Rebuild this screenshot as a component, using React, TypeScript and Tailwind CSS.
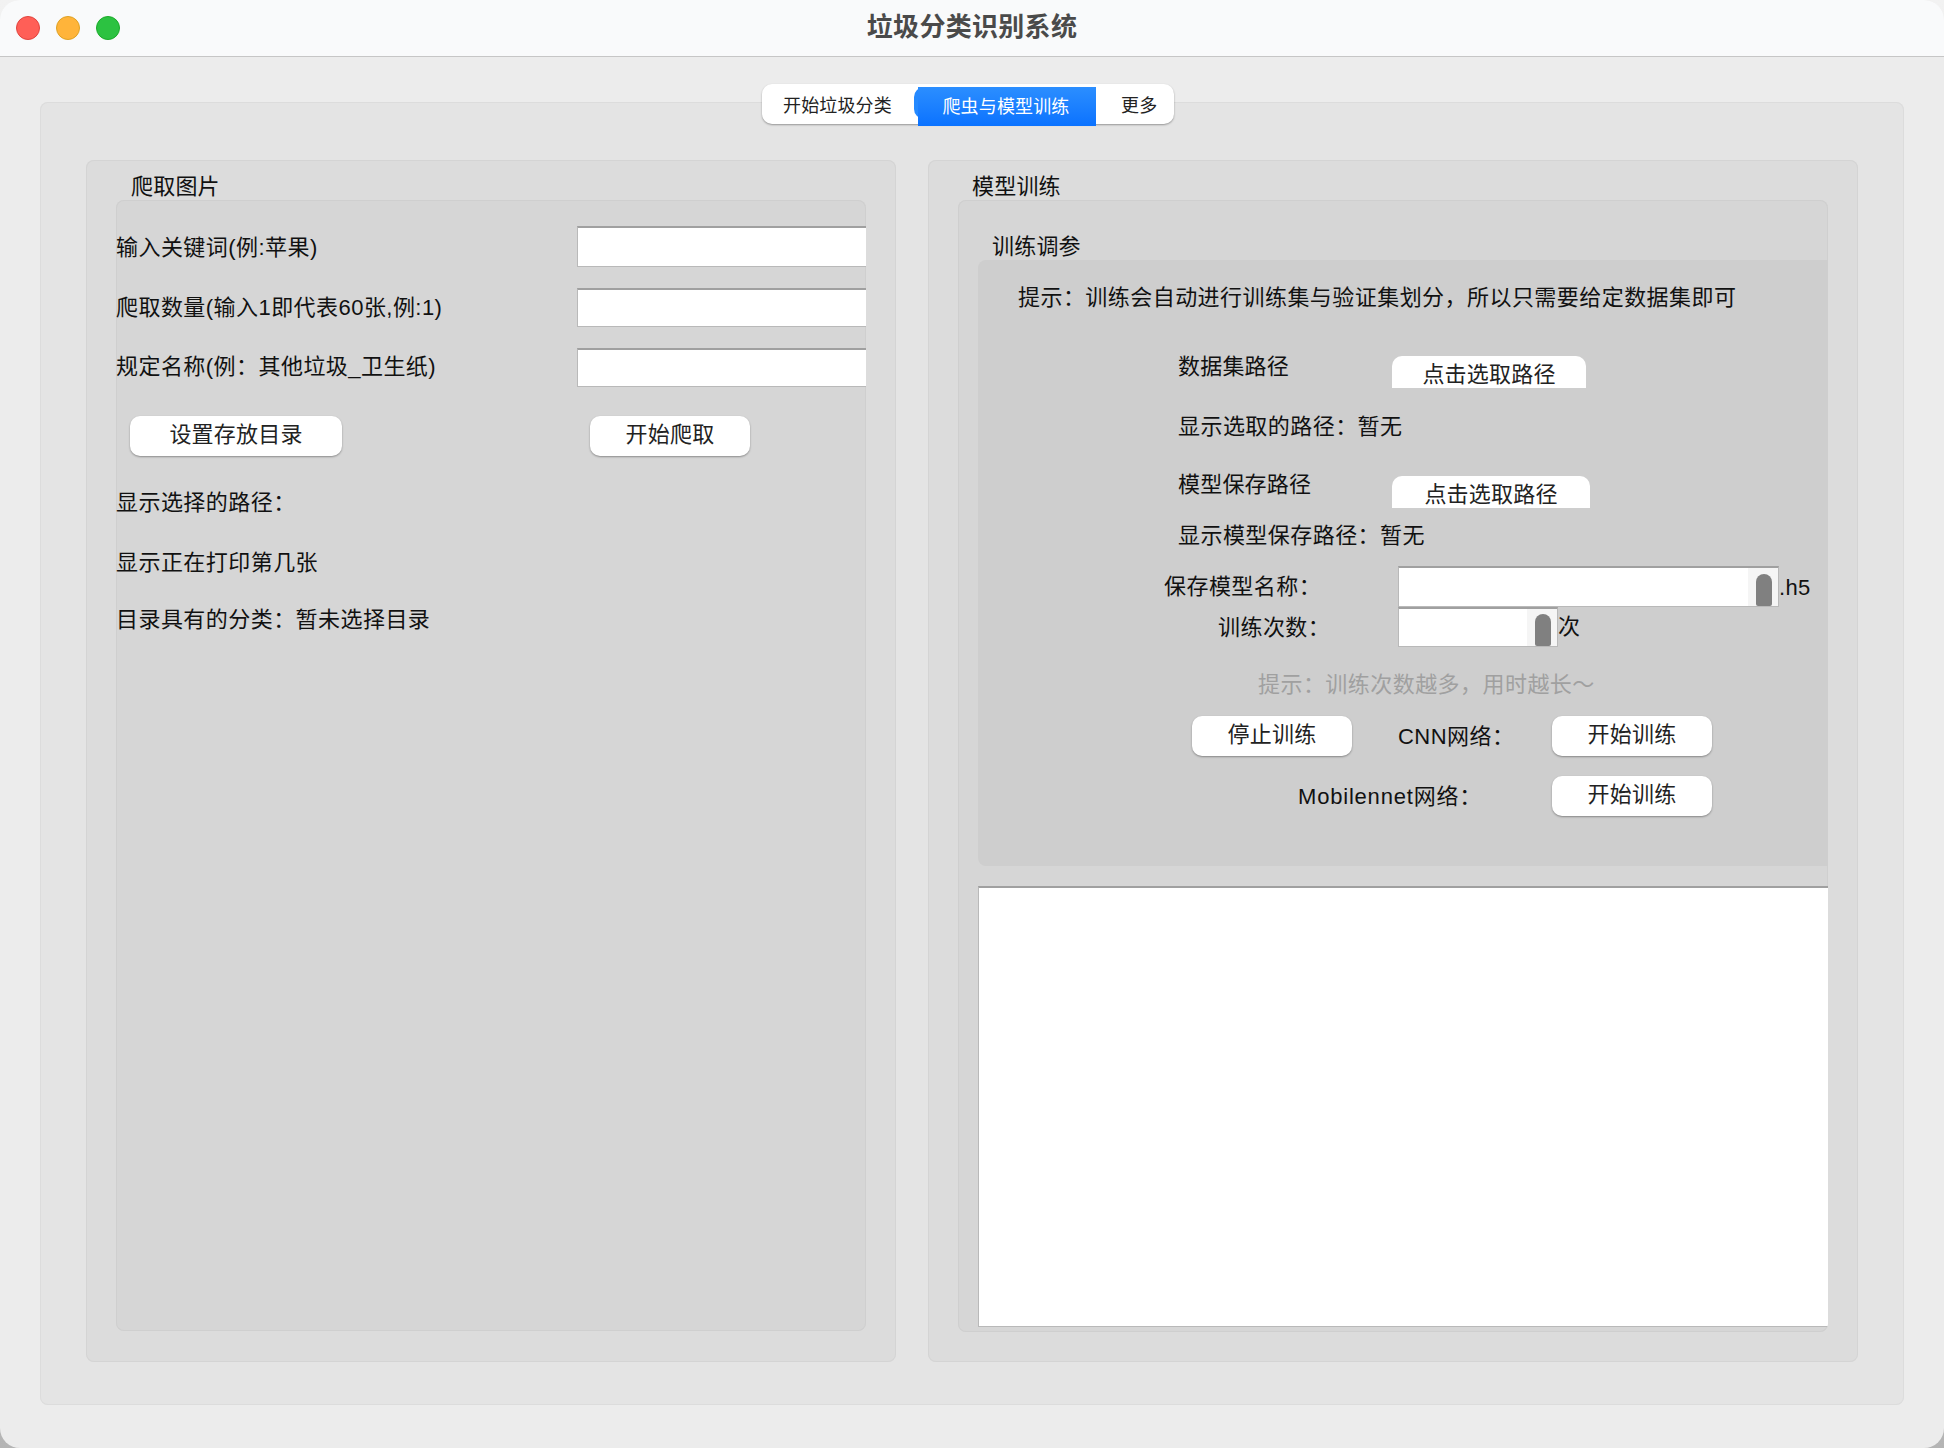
const FONT = "font-['Liberation_Sans','Noto_Sans_CJK_SC',sans-serif]";

function Label({ children, className = "" }: { children: React.ReactNode; className?: string }) {
  return <div className={`h-[30px] pt-[1px] text-[22px] leading-[30px] tracking-[0.45px] whitespace-nowrap text-[#111] ${className}`}>{children}</div>;
}

function Button({ children, className = "" }: { children: React.ReactNode; className?: string }) {
  return (
    <button
      type="button"
      className={`h-[40px] shrink-0 rounded-[10px] bg-white pb-[3px] text-[22px] leading-[30px] tracking-[0.2px] text-[#222] shadow-[0_1px_2px_rgba(0,0,0,0.35)] ${className}`}
    >
      {children}
    </button>
  );
}

function PathButton({ className = "" }: { className?: string }) {
  return (
    <button
      type="button"
      className={`h-[32px] shrink-0 overflow-hidden rounded-t-[10px] bg-white pt-[5px] text-[22px] leading-[28px] tracking-[0.2px] text-[#222] ${className}`}
    >
      点击选取路径
    </button>
  );
}

function TextInput({ className = "" }: { className?: string }) {
  return <input className={`ml-auto w-[289px] border-t-2 border-b border-l border-t-[#a0a0a0] border-b-[#b9b9b9] border-l-[#b9b9b9] bg-white outline-none ${className}`} />;
}

function SpinInput({ className = "" }: { className?: string }) {
  return (
    <div className={`flex shrink-0 border border-t-2 border-[#b9b9b9] border-t-[#a0a0a0] bg-white ${className}`}>
      <div className="flex-1" />
      <div className="flex w-[30px] items-end justify-center bg-[#f5f5f5] pl-[2px]">
        <div className="h-[32px] w-[16px] rounded-t-[8px] rounded-b-[2px] bg-[#808080]" />
      </div>
    </div>
  );
}

function Tabs() {
  return (
    <div className="relative z-10 mr-[8px] flex h-[40px] w-[412px] shrink-0 rounded-[10px] bg-white text-[18px] leading-[26px] tracking-[0.15px] text-[#222] shadow-[0_1px_2px_rgba(0,0,0,0.35)]">
      <div className="flex w-[152px] items-center pt-[3px] pl-[21px] whitespace-nowrap">开始垃圾分类</div>
      <div className="relative mt-[3px] flex h-[39px] w-[182px] items-center justify-center pl-[2px] whitespace-nowrap text-white">
        <div className="absolute top-0 bottom-[7px] left-0 w-[20px] rounded-l-[10px] bg-[#2489ff]" />
        <div className="absolute inset-y-0 right-0 left-[4px] bg-gradient-to-b from-[#2b8eff] to-[#0a72ff]" />
        <span className="relative">爬虫与模型训练</span>
      </div>
      <div className="flex items-center pt-[3px] pl-[25px] whitespace-nowrap">更多</div>
    </div>
  );
}

function CrawlGroup() {
  return (
    <div className="flex h-[1202px] w-[810px] flex-col rounded-[8px] bg-[#dcdcdc] px-[30px] shadow-[inset_0_0_0_1px_#d4d4d4]">
      <div className="flex h-[40px] items-end pl-[15px] text-[22px] leading-[26px] tracking-[0.2px] text-[#111]">爬取图片</div>
      <div className="h-[1131px] overflow-hidden rounded-[8px] bg-[#d6d6d6] shadow-[inset_0_0_0_1px_#cfcfcf]">
        <div className="mt-[26px] flex h-[41px] items-center">
          <Label>输入关键词(例:苹果)</Label>
          <TextInput className="h-[41px]" />
        </div>
        <div className="mt-[21px] flex h-[39px] items-center">
          <Label className="mb-[2px]">爬取数量(输入1即代表60张,例:1)</Label>
          <TextInput className="h-[39px]" />
        </div>
        <div className="mt-[21px] flex h-[39px] items-center">
          <Label className="mb-[4px]">规定名称(例：其他垃圾_卫生纸)</Label>
          <TextInput className="h-[39px]" />
        </div>
        <div className="mt-[29px] flex pl-[14px]">
          <Button className="w-[212px]">设置存放目录</Button>
          <Button className="ml-[248px] w-[160px]">开始爬取</Button>
        </div>
        <Label className="mt-[31px]">显示选择的路径：</Label>
        <Label className="mt-[30px]">显示正在打印第几张</Label>
        <Label className="mt-[27px]">目录具有的分类：暂未选择目录</Label>
      </div>
    </div>
  );
}

function TuningPanel() {
  return (
    <div className="ml-[20px] h-[606px] rounded-l-[8px] bg-[#cecece] pt-[22px]">
      <Label className="ml-[40px]">提示：训练会自动进行训练集与验证集划分，所以只需要给定数据集即可</Label>

      <div className="mt-[44px] ml-[200px] flex items-start">
        <div className="w-[214px] pt-[1px] text-[22px] leading-[20px] tracking-[0.2px] text-[#111]">数据集路径</div>
        <PathButton className="w-[194px]" />
      </div>
      <Label className="mt-[23px] ml-[200px]">显示选取的路径：暂无</Label>

      <div className="mt-[33px] ml-[200px] flex items-start">
        <div className="w-[214px] pt-[1px] text-[22px] leading-[20px] tracking-[0.2px] text-[#111]">模型保存路径</div>
        <PathButton className="mt-[2px] w-[198px]" />
      </div>
      <Label className="mt-[12px] ml-[200px]">显示模型保存路径：暂无</Label>

      <div className="mt-[16px] ml-[186px] flex items-center">
        <Label className="mb-[2px] w-[234px]">保存模型名称：</Label>
        <SpinInput className="h-[41px] w-[381px]" />
        <span className="pt-[2px] text-[22px] leading-[30px] tracking-[0.3px] text-[#111]">.h5</span>
      </div>
      <div className="ml-[240px] flex items-center">
        <Label className="w-[180px]">训练次数：</Label>
        <SpinInput className="h-[40px] w-[160px]" />
        <span className="text-[22px] leading-[30px] text-[#111]">次</span>
      </div>

      <Label className="mt-[22px] ml-[280px] !text-[#a0a0a0]">提示：训练次数越多，用时越长～</Label>

      <div className="mt-[17px] ml-[214px] flex items-center">
        <Button className="w-[160px]">停止训练</Button>
        <Label className="ml-[46px] w-[154px]">CNN网络：</Label>
        <Button className="w-[160px]">开始训练</Button>
      </div>
      <div className="mt-[20px] ml-[320px] flex items-center">
        <Label className="w-[254px] !tracking-[0.8px]">Mobilennet网络：</Label>
        <Button className="w-[160px]">开始训练</Button>
      </div>
    </div>
  );
}

function TrainGroup() {
  return (
    <div className="flex h-[1202px] w-[930px] flex-col rounded-[8px] bg-[#dcdcdc] px-[30px] shadow-[inset_0_0_0_1px_#d4d4d4]">
      <div className="flex h-[40px] items-end pl-[14px] text-[22px] leading-[26px] tracking-[0.2px] text-[#111]">模型训练</div>
      <div className="h-[1132px] overflow-hidden rounded-[8px] bg-[#d6d6d6] shadow-[inset_0_0_0_1px_#cfcfcf]">
        <div className="flex h-[60px] items-end pl-[34px] text-[22px] leading-[26px] tracking-[0.2px] text-[#111]">训练调参</div>
        <TuningPanel />
        <div className="mt-[20px] ml-[20px] h-[441px] border-t-2 border-b border-l border-t-[#a0a0a0] border-b-[#b9b9b9] border-l-[#b9b9b9] bg-white" />
      </div>
    </div>
  );
}

export default function App() {
  return (
    <div className={`h-[1448px] w-[1944px] overflow-hidden bg-gradient-to-b from-[#f2f2f2] to-[#b4b4b4] ${FONT}`}>
      <div className="flex h-full flex-col overflow-hidden rounded-[20px] bg-[#ececec]">
        <div className="grid h-[57px] shrink-0 grid-cols-[1fr_auto_1fr] items-center border-b border-[#c6c6c6] bg-[#f9fafb]">
          <div className="flex gap-[16px] pl-[16px]">
            <div className="h-[24px] w-[24px] rounded-full border border-[#e0443e] bg-[#ff5f57]" />
            <div className="h-[24px] w-[24px] rounded-full border border-[#dea123] bg-[#ffb43a]" />
            <div className="h-[24px] w-[24px] rounded-full border border-[#1aab29] bg-[#2cc241]" />
          </div>
          <div className="pb-[2px] text-[26px] leading-[34px] font-bold tracking-[0.3px] text-[#4a4a4a]">垃圾分类识别系统</div>
          <div />
        </div>
        <div className="flex flex-1 flex-col items-center px-[40px] pt-[27px]">
          <Tabs />
          <div className="-mt-[22px] flex h-[1303px] w-[1864px] gap-[32px] rounded-[8px] bg-[#e4e4e4] px-[46px] pt-[58px] shadow-[inset_0_0_0_1px_#dcdcdc]">
            <CrawlGroup />
            <TrainGroup />
          </div>
        </div>
      </div>
    </div>
  );
}
